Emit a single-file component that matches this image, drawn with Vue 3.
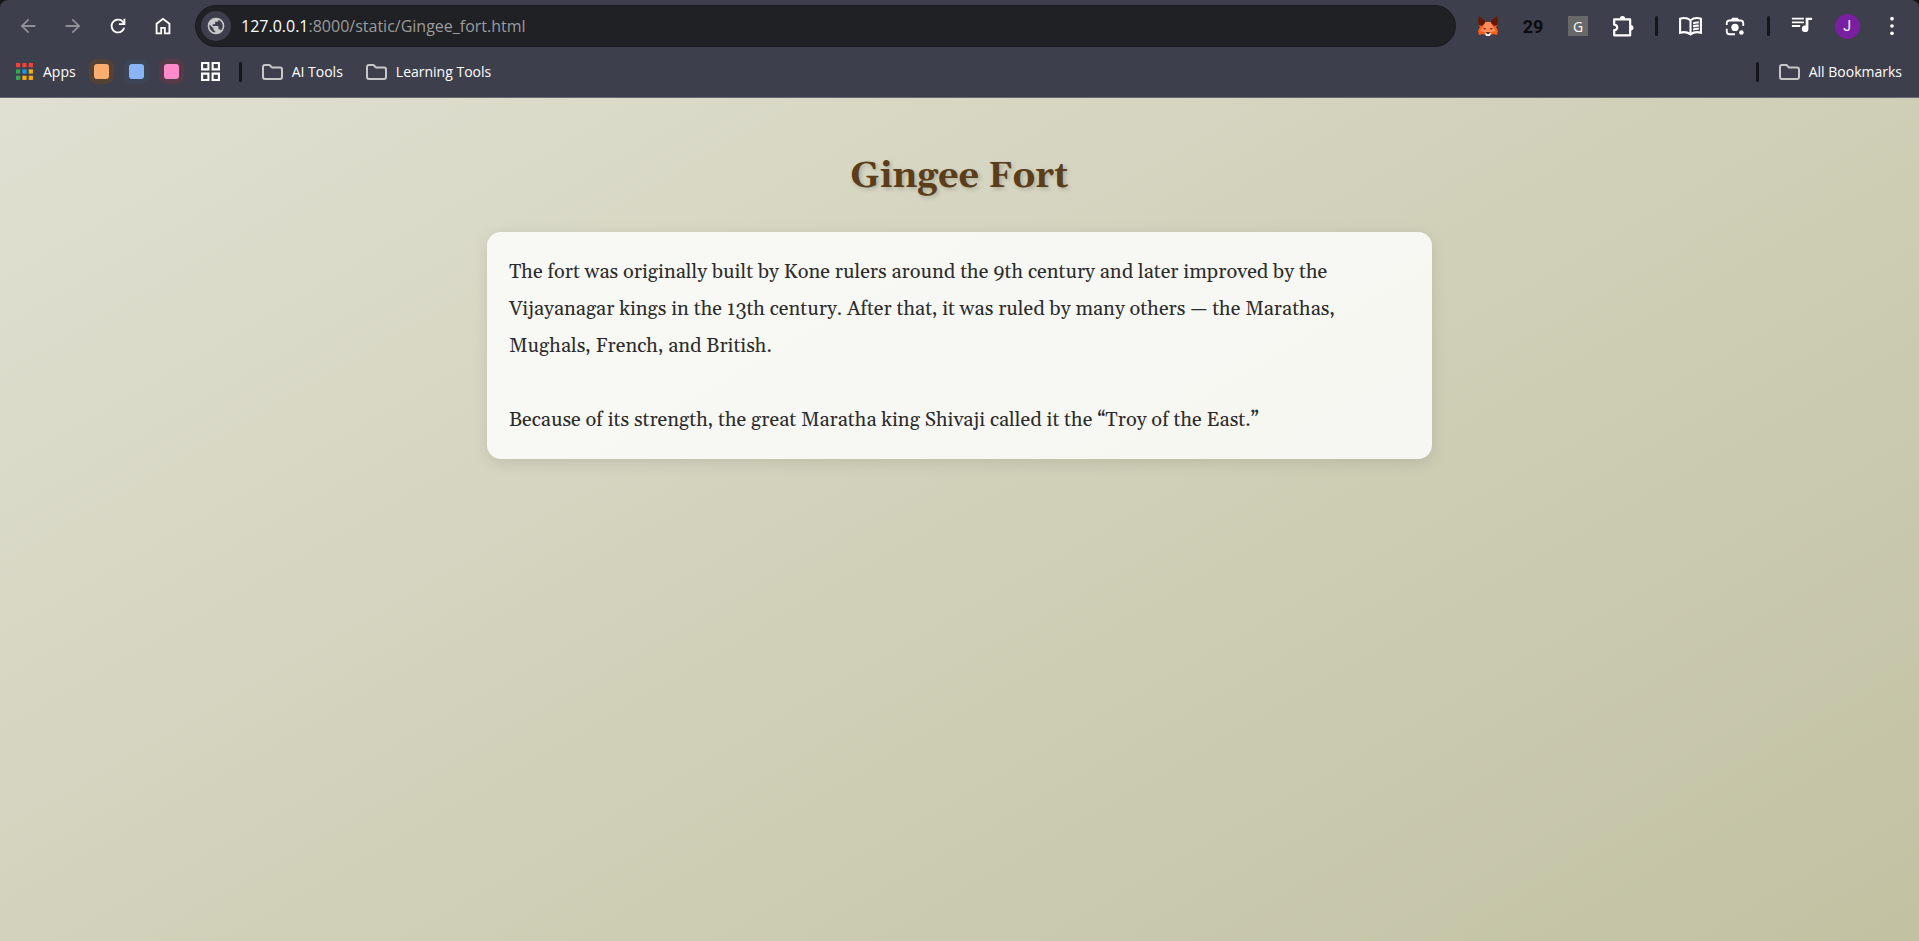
<script setup>
const swatches = [
  { name: 'Orange group', tone: 'orange' },
  { name: 'Blue group', tone: 'blue' },
  { name: 'Pink group', tone: 'pink' },
]
const folders = ['AI Tools', 'Learning Tools']
const appColors = ['#f44336', '#f44336', '#f44336', '#34a853', '#2196f3', '#fbae08', '#34a853', '#fbae08', '#fbae08']
</script>

<template>
  <div class="window">
    <header class="chrome">
      <div class="toolbar">
        <nav class="nav" aria-label="Navigation">
          <button class="icon dim" aria-label="Back">
            <svg viewBox="0 0 24 24"><path d="M20 11H7.8l5.6-5.6L12 4l-8 8 8 8 1.4-1.4L7.8 13H20z" /></svg>
          </button>
          <button class="icon dim" aria-label="Forward">
            <svg viewBox="0 0 24 24"><path d="M4 11h12.2l-5.6-5.6L12 4l8 8-8 8-1.4-1.4 5.6-5.6H4z" /></svg>
          </button>
          <button class="icon" aria-label="Reload">
            <svg viewBox="0 0 24 24"><path d="M12 20a8 8 0 1 1 6-13.3V4h2v7h-7V9h4.2A6 6 0 1 0 17.7 14h2A8 8 0 0 1 12 20z" /></svg>
          </button>
          <button class="icon" aria-label="Home">
            <svg viewBox="0 0 24 24"><path d="M6 19h3v-6h6v6h3v-9l-6-4.5L6 10zM4 21V9l8-6 8 6v12h-7v-6h-2v6z" /></svg>
          </button>
        </nav>
        <form class="address" @submit.prevent>
          <button class="site" type="button" aria-label="Site information">
            <svg viewBox="0 0 24 24"><path d="M12 2a10 10 0 1 0 0 20 10 10 0 0 0 0-20zm-1 17.9A8 8 0 0 1 4.2 10.2L9 15v1c0 1.1.9 2 2 2zm6.9-2.5A2 2 0 0 0 16 16h-1v-3c0-.6-.4-1-1-1H8v-2h2c.6 0 1-.4 1-1V7h2c1.1 0 2-.9 2-2v-.4a8 8 0 0 1 2.9 12.8z" /></svg>
          </button>
          <a class="url" href="#"><span class="host">127.0.0.1</span>:8000/static/Gingee_fort.html</a>
        </form>
        <div class="extensions">
          <button class="icon" aria-label="Fox wallet">
            <svg viewBox="0 0 22 22">
              <path fill="#ff5c16" d="M2 3l6 4h6l6-4v7l-1 2 2 4-1 4-4-1-2 1H8l-2-1-4 1-1-4 2-4-1-2z" />
              <path fill="#ff8d5d" d="M8 7h6l2 5 3 4-5 1H8l-5-1 3-4z" />
              <path fill="#661800" d="M2 1l6 5v2l-3 3-3-1-1-4zM20 1l-6 5v2l3 3 3-1 1-4z" />
              <path fill="#8c2a0a" d="M6 13l3 0-1 2zM16 13l-3 0 1 2z" />
              <path fill="#e7ebf6" d="M8 18h6l-1 3H9z" />
              <path fill="#393939" d="M9 17h4l-1 2h-2z" />
            </svg>
          </button>
          <button class="icon count" aria-label="29 items">29</button>
          <button class="icon" aria-label="G extension"><span class="letter">G</span></button>
          <button class="icon" aria-label="Extensions">
            <svg viewBox="2 1 20 20"><path fill="none" stroke="currentColor" stroke-width="2" stroke-linejoin="round" d="M4 5h14.500v14.500H4v-4.700c3.600-.4 3.600-4.600 0-5z" /><path d="M9 4.500a2.500 2.500 0 0 1 5 0zM19 10a2.500 2.500 0 0 1 0 5z" /></svg>
          </button>
          <span class="divider"></span>
          <button class="icon" aria-label="Reading mode">
            <svg class="wide" viewBox="0 0 24 20"><path fill="none" stroke="currentColor" stroke-width="2" d="M12 4.500C9 2.200 5 2 2 3v13.500c3-1 7-.7 10 1.500 3-2.200 7-2.500 10-1.500V3c-3-1-7-.8-10 1.500zM12 4v14M14.500 7.500c2-.9 3.500-1 5.500-.8M14.500 10.500c2-.9 3.500-1 5.500-.8M14.500 13.500c2-.9 3.500-1 5.500-.8" /></svg>
          </button>
          <button class="icon" aria-label="Search with lens">
            <svg viewBox="0 0 24 24"><path fill="none" stroke="currentColor" stroke-width="2" d="M3 11V9a3 3 0 0 1 3-3h12a3 3 0 0 1 3 3v3M3 15v3a3 3 0 0 0 3 3h6" /><path d="M7 6l2-3h6l2 3z" /><circle cx="12" cy="13.500" r="4" /><circle cx="19" cy="19" r="2.500" /></svg>
          </button>
          <span class="divider"></span>
          <button class="icon" aria-label="Media controls">
            <svg viewBox="0 0 24 24"><path d="M1 3h13v2H1zM1 7h13v2H1zM1 11h9v2H1zM16 3h7v2.500h-4V15a3.600 3.600 0 1 1-3-3.500z" /></svg>
          </button>
          <button class="icon" aria-label="Profile"><span class="avatar">J</span></button>
          <button class="icon" aria-label="Menu">
            <svg viewBox="0 0 24 24"><circle cx="12" cy="4" r="2" /><circle cx="12" cy="12" r="2" /><circle cx="12" cy="20" r="2" /></svg>
          </button>
        </div>
      </div>
      <nav class="bookmarks" aria-label="Bookmarks">
        <a class="mark" href="#">
          <svg class="apps" viewBox="0 0 17 17"><rect v-for="(c, i) in appColors" :key="i" :x="(i % 3) * 6" :y="Math.floor(i / 3) * 6" width="4" height="4" :fill="c" /></svg>
          Apps
        </a>
        <div class="groups">
          <button v-for="s in swatches" :key="s.tone" class="swatch" :class="s.tone" :aria-label="s.name"></button>
        </div>
        <button class="grid" aria-label="Tab groups">
          <svg viewBox="0 0 18 18"><path fill="none" stroke="currentColor" stroke-width="2" d="M1 1h6v6H1zM11 1h6v6h-6zM1 11h6v6H1zM11 11h6v6h-6z" /></svg>
        </button>
        <span class="divider"></span>
        <a v-for="f in folders" :key="f" class="mark folder" href="#">
          <svg viewBox="0 0 21 16"><path d="M1 3a2 2 0 0 1 2-2h4.500l2.500 2.500h8a2 2 0 0 1 2 2V13a2 2 0 0 1-2 2H3a2 2 0 0 1-2-2z" /></svg>
          {{ f }}
        </a>
        <span class="divider last"></span>
        <a class="mark all" href="#">
          <svg viewBox="0 0 21 16"><path d="M1 3a2 2 0 0 1 2-2h4.500l2.500 2.500h8a2 2 0 0 1 2 2V13a2 2 0 0 1-2 2H3a2 2 0 0 1-2-2z" /></svg>
          All Bookmarks
        </a>
      </nav>
    </header>
    <main class="page">
      <h1>Gingee Fort</h1>
      <article class="card">
        <p>
          The fort was originally built by Kone rulers around the 9th century and later improved by the
          Vijayanagar kings in the 13th century. After that, it was ruled by many others — the Marathas,
          Mughals, French, and British.
        </p>
        <p>Because of its strength, the great Maratha king Shivaji called it the “Troy of the East.”</p>
      </article>
    </main>
  </div>
</template>

<style>
body {
  background: #15161a;
}
</style>

<style scoped>
.window {
  display: flex;
  flex-direction: column;
  min-height: 100vh;
}
button {
  border: 0;
  padding: 0;
  background: none;
  color: inherit;
  font: inherit;
}
a {
  color: inherit;
  text-decoration: none;
}
svg {
  display: block;
  fill: currentColor;
}
.chrome {
  background: #3e3f4c;
  border-bottom: 1px solid #65666f;
  border-radius: 8px 8px 0 0;
  color: #fff;
  font-family: "Open Sans", "Noto Sans", sans-serif;
}
.toolbar {
  display: flex;
  align-items: center;
  height: 52px;
  padding: 0 12px 0 13px;
}
.nav {
  display: flex;
  gap: 15px;
}
.icon {
  display: grid;
  place-items: center;
  width: 30px;
  height: 30px;
}
.icon svg {
  width: 22px;
  height: 22px;
}
.icon .wide {
  width: 25px;
}
.dim {
  color: #8f9097;
}
.address {
  display: flex;
  flex: 1;
  align-items: center;
  gap: 10px;
  height: 42px;
  margin: 0 17px;
  padding-left: 5px;
  box-sizing: border-box;
  border-radius: 21px;
  background: #202124;
  border: 1px solid #1a1b1e;
}
.site {
  display: grid;
  place-items: center;
  width: 30px;
  height: 30px;
  border-radius: 50%;
  background: #3e3f4c;
  color: #c7c7c7;
}
.site svg {
  width: 20px;
  height: 20px;
}
.url {
  color: #9a9b9e;
  font-size: 16px;
}
.host {
  color: #fff;
}
.extensions {
  display: flex;
  align-items: center;
  gap: 15px;
}
.extensions .divider {
  margin: 0 2px;
}
.count {
  color: #0c0c0e;
  font: bold 18px Roboto, sans-serif;
}
.letter {
  display: grid;
  place-items: center;
  width: 20px;
  height: 20px;
  background: #686868;
  font-size: 14px;
}
.avatar {
  display: grid;
  place-items: center;
  width: 25px;
  height: 25px;
  border-radius: 50%;
  background: #7b1fa2;
  font: 14px Roboto, sans-serif;
}
.divider {
  width: 3px;
  height: 20px;
  border-radius: 2px;
  background: #15161a;
}
.bookmarks {
  display: flex;
  align-items: center;
  height: 39px;
  padding: 0 17px 6px 16px;
  font-size: 14px;
}
.mark {
  display: flex;
  align-items: center;
  gap: 9px;
}
.apps {
  width: 18px;
  height: 18px;
}
.groups {
  display: flex;
  gap: 10px;
  margin: 0 17px 0 13px;
}
.swatch {
  width: 25px;
  height: 25px;
  border: 5px solid;
  border-radius: 8px;
}
.orange {
  background: #fcad70;
  border-color: #544235;
}
.blue {
  background: #8ab4f8;
  border-color: #3b4556;
}
.pink {
  background: #ff8bcb;
  border-color: #573a4a;
}
.grid svg {
  width: 19px;
  height: 19px;
}
.bookmarks .divider {
  margin: 0 20px 0 19px;
}
.folder svg,
.all svg {
  width: 21px;
  height: 16px;
  fill: none;
  stroke: #c7c7c7;
  stroke-width: 2;
}
.folder + .folder {
  margin-left: 23px;
}
.bookmarks .last {
  margin-left: auto;
}
.page {
  flex: 1;
  padding: 57px 24px;
  background: linear-gradient(150deg, #dfe0d1, #c2c1a2);
}
h1 {
  margin: 0 0 34px;
  color: #5c3d1a;
  font: bold 36px/43px Georgia, Gelasio, "Liberation Serif", serif;
  text-align: center;
  text-shadow: 2px 2px 4px rgba(0, 0, 0, 0.2);
}
.card {
  max-width: 945px;
  box-sizing: border-box;
  margin: 0 auto;
  padding: 22px 22px 20px;
  border-radius: 14px;
  background: rgba(255, 255, 255, 0.82);
  box-shadow: 0 4px 16px rgba(0, 0, 0, 0.1);
  color: #2c2c2c;
  font: 20px/37px Georgia, Gelasio, "Liberation Serif", serif;
}
.card p {
  margin: 0;
}
.card p + p {
  margin-top: 37px;
}
</style>
